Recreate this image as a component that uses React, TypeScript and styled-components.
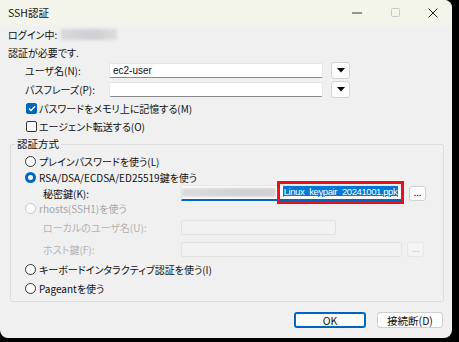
import React from 'react';
import styled, { createGlobalStyle } from 'styled-components';

const GlobalStyle = createGlobalStyle`
  html, body {
    margin: 0;
    background: #000;
  }
  body {
    font-family: "Noto Sans CJK JP", "Liberation Sans", sans-serif;
  }
`;

const Window = styled.div`
  width: 452px;
  height: 338px;
  background: #f0f0f0;
  border-radius: 0 8px 8px 8px;
  overflow: hidden;
  display: flex;
  flex-direction: column;
  font-size: 10px;
  font-weight: 400;
  color: #111;
  font-feature-settings: "palt";
`;

const TitleBar = styled.div`
  height: 25px;
  background: #f3f4ea;
  display: flex;
  align-items: center;
  padding-left: 8px;
`;

const Title = styled.span`
  flex: 1;
  font-size: 10.5px;
`;

const TitleButton = styled.div`
  width: 38px;
  height: 25px;
  display: flex;
  align-items: center;
  justify-content: center;
`;

const Body = styled.div`
  padding: 0 8px;
  display: flex;
  flex-direction: column;
`;

const Line = styled.div`
  height: 18px;
  display: flex;
  align-items: center;
`;

const Blurred = styled.span<{ $w: number }>`
  display: inline-block;
  width: ${(p) => p.$w}px;
  height: 11px;
  margin-left: 4px;
  background: linear-gradient(90deg, #d9d9dc, #cfcfd3 60%, #dedee0);
  filter: blur(1.5px);
`;

const FormRow = styled.div<{ $h: number }>`
  height: ${(p) => p.$h}px;
  display: grid;
  grid-template-columns: 76px 214px 19px;
  column-gap: 8px;
  align-items: center;
  margin-left: 17px;
`;

const TextInput = styled.div<{ $w?: number; $disabled?: boolean }>`
  box-sizing: border-box;
  height: 15px;
  width: ${(p) => (p.$w ? `${p.$w}px` : 'auto')};
  background: ${(p) => (p.$disabled ? '#f2f2f2' : '#fff')};
  border: 1px solid ${(p) => (p.$disabled ? '#e2e2e2' : '#e6e6e6')};
  border-bottom-color: ${(p) => (p.$disabled ? '#e2e2e2' : '#8a8a8a')};
  border-radius: 2px;
  display: flex;
  align-items: center;
  padding-left: 3px;
  font-family: "Liberation Sans", sans-serif;
  font-size: 10px;
`;

const DropButton = styled.div`
  box-sizing: border-box;
  height: 17px;
  background: #fdfdfd;
  border: 1px solid #d4d4d4;
  border-radius: 3px;
  display: flex;
  align-items: center;
  justify-content: center;
`;

const CheckRow = styled.label`
  height: 18px;
  display: flex;
  align-items: center;
  gap: 2px;
  margin-left: 18px;
`;

const Box = styled.span<{ $checked?: boolean }>`
  box-sizing: border-box;
  width: 11px;
  height: 11px;
  border-radius: 2px;
  border: 1px solid ${(p) => (p.$checked ? '#0067c0' : '#333')};
  background: ${(p) => (p.$checked ? '#0067c0' : '#fff')};
  display: flex;
  align-items: center;
  justify-content: center;
`;

const Group = styled.fieldset`
  box-sizing: border-box;
  width: 434px;
  margin: 1px 0 0 2px;
  padding: 0 0 5px 4px;
  border: 1px solid #dcdcdc;
  border-radius: 2px;
  display: flex;
  flex-direction: column;
`;

const Legend = styled.legend`
  padding: 0 2px;
  line-height: 16px;
  font-size: 10.5px;
`;

const RadioRow = styled.div<{ $h: number; $mt?: number; $disabled?: boolean }>`
  height: ${(p) => p.$h}px;
  margin-top: ${(p) => p.$mt ?? 0}px;
  margin-left: 10px;
  display: flex;
  align-items: center;
  gap: 3px;
  color: ${(p) => (p.$disabled ? '#a6a6a6' : '#111')};
`;

const Radio = styled.span<{ $checked?: boolean; $disabled?: boolean }>`
  box-sizing: border-box;
  width: 11px;
  height: 11px;
  border-radius: 50%;
  border: ${(p) =>
    p.$checked ? '3px solid #0067c0' : `1px solid ${p.$disabled ? '#c4c4c4' : '#333'}`};
  background: #fff;
`;

const SubRow = styled.div<{ $h: number; $mt?: number; $disabled?: boolean }>`
  height: ${(p) => p.$h}px;
  margin-top: ${(p) => p.$mt ?? 0}px;
  margin-left: 28px;
  display: flex;
  align-items: center;
  color: ${(p) => (p.$disabled ? '#b3b3b3' : '#111')};
`;

const SubLabel = styled.span`
  width: 138px;
  flex-shrink: 0;
`;

const KeyInput = styled.div`
  box-sizing: border-box;
  width: 223px;
  height: 16px;
  background: #fff;
  border: 1px solid #e6e6e6;
  border-bottom: 2px solid #0067c0;
  display: flex;
  align-items: center;
`;

const KeyBlur = styled.span`
  flex: 1;
  height: 9px;
  background: linear-gradient(90deg, #dcdcdf, #cfd0d4 70%, #d8cfd3);
  filter: blur(1px);
`;

const Marked = styled.span`
  box-sizing: border-box;
  width: 121px;
  height: 17px;
  margin: 0 2px 0 4px;
  display: flex;
  align-items: flex-start;
  justify-content: center;
  padding-top: 2px;
  outline: 3px solid #e8101a;
`;

const Selected = styled.span`
  padding: 0 1px;
  background: #0078d7;
  color: #fff;
  font-family: "Liberation Sans", sans-serif;
  font-size: 9.5px;
  letter-spacing: -0.4px;
  line-height: 11px;
  white-space: nowrap;
  text-decoration: underline;
`;

const SmallButton = styled.div<{ $disabled?: boolean }>`
  box-sizing: border-box;
  width: 17px;
  height: 15px;
  margin-left: 5px;
  background: ${(p) => (p.$disabled ? '#f4f4f4' : '#fdfdfd')};
  border: 1px solid ${(p) => (p.$disabled ? '#e6e6e6' : '#d0d0d0')};
  border-radius: 3px;
  color: ${(p) => (p.$disabled ? '#bbb' : '#000')};
  font-size: 9px;
  line-height: 9px;
  display: flex;
  align-items: flex-end;
  justify-content: center;
  padding-bottom: 3px;
`;

const Footer = styled.div`
  margin-top: 10px;
  margin-right: 1px;
  display: flex;
  justify-content: flex-end;
  gap: 11px;
`;

const Button = styled.div<{ $w: number; $default?: boolean }>`
  box-sizing: border-box;
  width: ${(p) => p.$w}px;
  height: 16px;
  background: #fdfdfd;
  border: ${(p) => (p.$default ? '2px solid #0067c0' : '1px solid #d0d0d0')};
  border-radius: 3px;
  display: flex;
  align-items: center;
  justify-content: center;
  font-size: 10.5px;
`;

const Caret = () => (
  <svg width="8" height="5" viewBox="0 0 8 5">
    <path d="M0 0h8L4 4.5z" fill="#000" />
  </svg>
);

const Check = () => (
  <svg width="8" height="7" viewBox="0 0 8 7">
    <path d="M1 3.6l2 2L7 1.2" stroke="#fff" strokeWidth="1.4" fill="none" />
  </svg>
);

export default function App() {
  return (
    <>
      <GlobalStyle />
      <Window>
        <TitleBar>
          <Title>SSH認証</Title>
          <TitleButton>
            <svg width="10" height="2" viewBox="0 0 10 2">
              <path d="M0 1h10" stroke="#333" strokeWidth="1" />
            </svg>
          </TitleButton>
          <TitleButton>
            <svg width="9" height="9" viewBox="0 0 9 9">
              <rect x="0.5" y="0.5" width="8" height="8" rx="1" stroke="#c8c8c8" fill="none" />
            </svg>
          </TitleButton>
          <TitleButton>
            <svg width="10" height="10" viewBox="0 0 10 10">
              <path d="M0.5 0.5l9 9M9.5 0.5l-9 9" stroke="#222" strokeWidth="1" />
            </svg>
          </TitleButton>
        </TitleBar>
        <Body>
          <Line>
            ログイン中:<Blurred $w={56} />
          </Line>
          <Line>認証が必要です.</Line>
          <FormRow $h={19}>
            <span>ユーザ名(N):</span>
            <TextInput>ec2-user</TextInput>
            <DropButton>
              <Caret />
            </DropButton>
          </FormRow>
          <FormRow $h={19}>
            <span>パスフレーズ(P):</span>
            <TextInput />
            <DropButton>
              <Caret />
            </DropButton>
          </FormRow>
          <CheckRow>
            <Box $checked>
              <Check />
            </Box>
            パスワードをメモリ上に記憶する(M)
          </CheckRow>
          <CheckRow>
            <Box />
            エージェント転送する(O)
          </CheckRow>
          <Group>
            <Legend>認証方式</Legend>
            <RadioRow $h={16} $mt={1}>
              <Radio />
              プレインパスワードを使う(L)
            </RadioRow>
            <RadioRow $h={16}>
              <Radio $checked />
              RSA/DSA/ECDSA/ED25519鍵を使う
            </RadioRow>
            <SubRow $h={16}>
              <SubLabel>秘密鍵(K):</SubLabel>
              <KeyInput>
                <KeyBlur />
                <Marked>
                  <Selected>Linux_keypair_20241001.ppk</Selected>
                </Marked>
              </KeyInput>
              <SmallButton>...</SmallButton>
            </SubRow>
            <RadioRow $h={15} $disabled>
              <Radio $disabled />
              rhosts(SSH1)を使う
            </RadioRow>
            <SubRow $h={18} $mt={2} $disabled>
              <SubLabel>ローカルのユーザ名(U):</SubLabel>
              <TextInput $w={155} $disabled />
            </SubRow>
            <SubRow $h={18} $mt={4} $disabled>
              <SubLabel>ホスト鍵(F):</SubLabel>
              <TextInput $w={221} $disabled />
              <SmallButton $disabled>...</SmallButton>
            </SubRow>
            <RadioRow $h={16} $mt={3}>
              <Radio />
              キーボードインタラクティブ認証を使う(I)
            </RadioRow>
            <RadioRow $h={16} $mt={3}>
              <Radio />
              Pageantを使う
            </RadioRow>
          </Group>
          <Footer>
            <Button $w={72} $default>
              OK
            </Button>
            <Button $w={66}>接続断(D)</Button>
          </Footer>
        </Body>
      </Window>
    </>
  );
}
